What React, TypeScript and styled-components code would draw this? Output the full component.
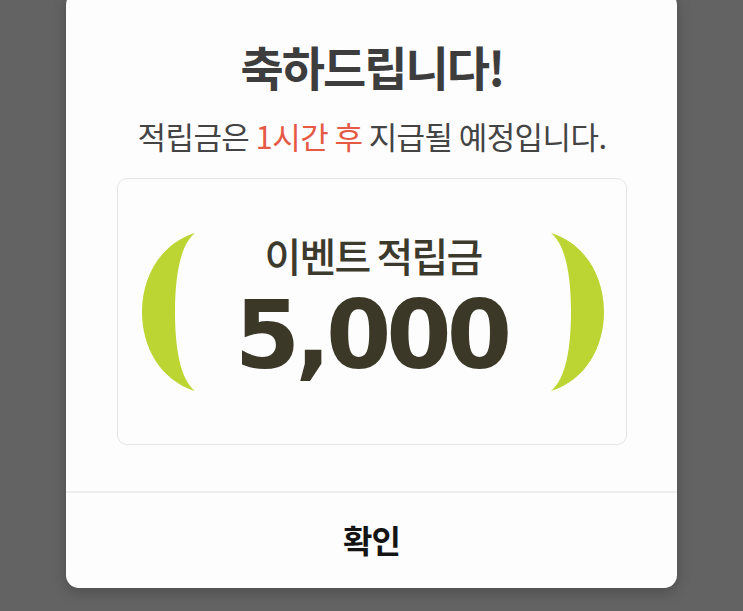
import React from "react";
import styled, { createGlobalStyle } from "styled-components";

const Global = createGlobalStyle`
  html, body {
    margin: 0;
    padding: 0;
    background: #636363;
    overflow: hidden;
  }
  body {
    width: 743px;
    height: 611px;
    font-family: "Noto Sans CJK KR", "Noto Sans", sans-serif;
  }
`;

const Stage = styled.div`
  width: 743px;
  height: 611px;
  display: flex;
  justify-content: flex-start;
  align-items: flex-start;
`;

const Dialog = styled.div`
  margin-left: 66px;
  margin-top: -8px;
  width: 611px;
  height: 596px;
  background: #fdfdfd;
  border-radius: 13px;
  box-shadow: 0 4px 14px rgba(0, 0, 0, 0.22);
  display: flex;
  flex-direction: column;
  overflow: hidden;
`;

const Body = styled.div`
  flex: 1;
  display: flex;
  flex-direction: column;
  align-items: center;
  padding: 50px 50px 0 51px;
`;

const Title = styled.h1`
  margin: 0;
  font-size: 47px;
  line-height: 47px;
  font-weight: 700;
  letter-spacing: -2px;
  color: #3d3d3d;
`;

const Subtitle = styled.p`
  margin: 31px 0 0;
  font-size: 31px;
  line-height: 31px;
  font-weight: 400;
  letter-spacing: -0.6px;
  color: #444444;
`;

const Highlight = styled.span`
  color: #e65a45;
`;

const Card = styled.div`
  margin-top: 27px;
  width: 510px;
  height: 267px;
  box-sizing: border-box;
  border: 1px solid #e6e6e6;
  border-radius: 10px;
  display: flex;
  align-items: center;
  padding: 0 22px 0 24px;
`;

const Bracket = styled.svg<{ $flip?: boolean }>`
  width: 54px;
  height: 160px;
  flex: none;
  transform: ${(p) => (p.$flip ? "scaleX(-1)" : "none")};
`;

const Amount = styled.div`
  flex: 1;
  display: flex;
  flex-direction: column;
  align-items: center;
  padding-bottom: 14px;
`;

const Label = styled.div`
  font-size: 40px;
  line-height: 40px;
  font-weight: 500;
  letter-spacing: -1.8px;
  color: #3c3a2d;
`;

const Number = styled.div`
  margin-top: 22px;
  padding-right: 4px;
  font-family: "DejaVu Sans", "Noto Sans", sans-serif;
  font-size: 94px;
  line-height: 78px;
  font-weight: 700;
  letter-spacing: -5px;
  color: #3b3828;
`;

const Footer = styled.button`
  flex: none;
  height: 97px;
  border: none;
  border-top: 2px solid #eeeeee;
  background: transparent;
  font-family: "Noto Sans CJK KR", "Noto Sans", sans-serif;
  font-size: 32px;
  font-weight: 700;
  letter-spacing: -1px;
  color: #141414;
  display: flex;
  align-items: center;
  justify-content: center;
  padding: 0 0 4px;
`;

const BracketShape = ({ flip }: { flip?: boolean }) => (
  <Bracket $flip={flip} viewBox="0 0 54 160">
    <path
      d="M53 1 C 18 12, 0 45, 0 80 C 0 115, 18 148, 53 159 C 38 147, 33 115, 33 80 C 33 45, 38 13, 53 1 Z"
      fill="#bcd532"
    />
  </Bracket>
);

export default function App() {
  return (
    <>
      <Global />
      <Stage>
        <Dialog>
          <Body>
            <Title>축하드립니다!</Title>
            <Subtitle>
              적립금은 <Highlight>1시간 후</Highlight> 지급될 예정입니다.
            </Subtitle>
            <Card>
              <BracketShape />
              <Amount>
                <Label>이벤트 적립금</Label>
                <Number>5,000</Number>
              </Amount>
              <BracketShape flip />
            </Card>
          </Body>
          <Footer>확인</Footer>
        </Dialog>
      </Stage>
    </>
  );
}
